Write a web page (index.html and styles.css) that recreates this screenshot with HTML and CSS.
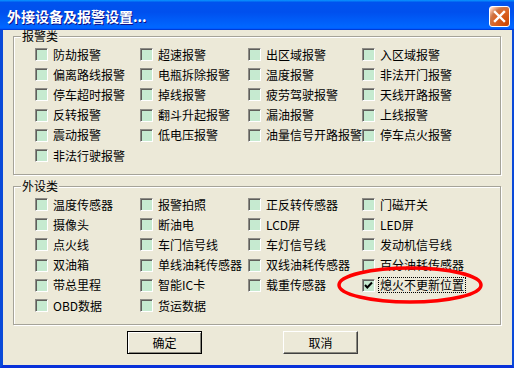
FILE: index.html
```html
<!DOCTYPE html>
<html lang="zh-CN">
<head>
    <meta charset="UTF-8">
    <title>外接设备及报警设置</title>
    <link rel="stylesheet" href="styles.css">
</head>
<body>
    <div class="window">
        <div class="titlebar">
            <span class="title">外接设备及报警设置...</span>
            <button class="close-btn">
                <svg width="13" height="13" viewBox="0 0 13 13"><path d="M2 2 L11 11 M11 2 L2 11" stroke="#fff" stroke-width="2.4" stroke-linecap="square"/></svg>
            </button>
        </div>
        <div class="content">
            <fieldset class="group">
                <legend>报警类</legend>
                <div class="grid">
                    <label class="item"><span class="box"></span>防劫报警</label>
                    <label class="item"><span class="box"></span>超速报警</label>
                    <label class="item"><span class="box"></span>出区域报警</label>
                    <label class="item"><span class="box"></span>入区域报警</label>
                    <label class="item"><span class="box"></span>偏离路线报警</label>
                    <label class="item"><span class="box"></span>电瓶拆除报警</label>
                    <label class="item"><span class="box"></span>温度报警</label>
                    <label class="item"><span class="box"></span>非法开门报警</label>
                    <label class="item"><span class="box"></span>停车超时报警</label>
                    <label class="item"><span class="box"></span>掉线报警</label>
                    <label class="item"><span class="box"></span>疲劳驾驶报警</label>
                    <label class="item"><span class="box"></span>天线开路报警</label>
                    <label class="item"><span class="box"></span>反转报警</label>
                    <label class="item"><span class="box"></span>翻斗升起报警</label>
                    <label class="item"><span class="box"></span>漏油报警</label>
                    <label class="item"><span class="box"></span>上线报警</label>
                    <label class="item"><span class="box"></span>震动报警</label>
                    <label class="item"><span class="box"></span>低电压报警</label>
                    <label class="item"><span class="box"></span>油量信号开路报警</label>
                    <label class="item"><span class="box"></span>停车点火报警</label>
                    <label class="item"><span class="box"></span>非法行驶报警</label>
                </div>
            </fieldset>

            <fieldset class="group group-second">
                <legend>外设类</legend>
                <div class="grid">
                    <label class="item"><span class="box"></span>温度传感器</label>
                    <label class="item"><span class="box"></span>报警拍照</label>
                    <label class="item"><span class="box"></span>正反转传感器</label>
                    <label class="item"><span class="box"></span>门磁开关</label>
                    <label class="item"><span class="box"></span>摄像头</label>
                    <label class="item"><span class="box"></span>断油电</label>
                    <label class="item"><span class="box"></span>LCD屏</label>
                    <label class="item"><span class="box"></span>LED屏</label>
                    <label class="item"><span class="box"></span>点火线</label>
                    <label class="item"><span class="box"></span>车门信号线</label>
                    <label class="item"><span class="box"></span>车灯信号线</label>
                    <label class="item"><span class="box"></span>发动机信号线</label>
                    <label class="item"><span class="box"></span>双油箱</label>
                    <label class="item"><span class="box"></span>单线油耗传感器</label>
                    <label class="item"><span class="box"></span>双线油耗传感器</label>
                    <label class="item"><span class="box"></span>百分油耗传感器</label>
                    <label class="item"><span class="box"></span>带总里程</label>
                    <label class="item"><span class="box"></span>智能IC卡</label>
                    <label class="item"><span class="box"></span>载重传感器</label>
                    <label class="item checked">
                        <span class="box">
                            <svg width="11" height="11" viewBox="0 0 11 11"><path d="M2 5 L4.3 7.5 L9 2.5" fill="none" stroke="#000" stroke-width="2"/></svg>
                        </span>
                        <span class="focus">熄火不更新位置</span>
                    </label>
                    <label class="item"><span class="box"></span>OBD数据</label>
                    <label class="item"><span class="box"></span>货运数据</label>
                </div>
            </fieldset>

            <div class="buttons">
                <button class="btn btn-default">确定</button>
                <button class="btn">取消</button>
            </div>
        </div>

        <!-- red annotation ring -->
        <svg class="ring" width="152" height="40" viewBox="0 0 152 40">
            <ellipse cx="74" cy="19" rx="71" ry="17" fill="none" stroke="#f00" stroke-width="3.5"/>
        </svg>
    </div>
</body>
</html>
```

FILE: styles.css
```css
body {
    margin: 0;
    overflow: hidden;
    font-family: "Noto Sans CJK SC", "Liberation Sans", sans-serif;
    font-size: 12px;
    color: #000;
}
.window {
    position: relative;
    width: 514px;
    height: 368px;
    box-sizing: border-box;
    background-color: #ece9d8;
    border-left: 3px solid #0a4ad9;
    border-right: 2px solid #0a4ad9;
    border-bottom: 3px solid #0831d9;
}
.titlebar {
    height: 30px;
    margin-left: -3px;
    margin-right: -2px;
    display: flex;
    align-items: center;
    justify-content: space-between;
    padding: 0 4px 0 7px;
    background: linear-gradient(180deg, #0997ff, #0053ee 8%, #0050ee 40%, #06f 88%, #06f 93%, #005bff 95%, #003dd7 96%, #003dd7);
}
.title {
    color: #fff;
    font-size: 14px;
    font-weight: bold;
    line-height: 14px;
    text-shadow: 1px 1px #0f1089;
    margin-top: 1px;
}
.close-btn {
    width: 21px;
    height: 21px;
    padding: 0;
    margin-top: 2px;
    border: 1px solid #fff;
    border-radius: 3px;
    display: flex;
    align-items: center;
    justify-content: center;
    background: radial-gradient(circle at 90% 90%, #cc4600 0, #dc6527 55%, #cd7546 70%, #ffccb2 90%, #fff 100%);
}
.content {
    padding: 0 11px 0 10px;
}
.group {
    margin: 0;
    padding: 0;
    min-width: 0;
    border: 1px solid #a5a399;
    box-shadow: inset 1px 1px 0 #fff, 1px 1px 0 #fff;
}
.group-second {
    margin-top: 5px;
}
.group legend {
    margin-left: 7px;
    padding: 0 1px;
    line-height: 12px;
    background-color: #ece9d8;
}
.grid {
    display: grid;
    grid-template-columns: 105px 108px 114px 1fr;
    grid-template-rows: repeat(6, 20.2px);
    height: 132px;
    box-sizing: border-box;
    padding: 2.5px 0 0 21px;
}
.item {
    display: flex;
    align-items: center;
    gap: 5px;
    white-space: nowrap;
    line-height: 14px;
}
.box {
    flex: none;
    width: 13px;
    height: 13px;
    box-sizing: border-box;
    background-color: #c6ead0;
    border: 1px solid;
    border-color: #8d8c86 #fff #fff #8d8c86;
    box-shadow: inset 1px 1px 0 #5f5f5b;
    display: flex;
    align-items: center;
    justify-content: center;
}
.focus {
    margin-left: -2px;
    padding: 0 1px;
    border: 1px dotted #000;
}
.buttons {
    display: flex;
    gap: 81px;
    padding-left: 114px;
    margin-top: 6px;
}
.btn {
    width: 75px;
    height: 23px;
    padding: 0;
    font-family: inherit;
    font-size: 12px;
    color: #000;
    background-color: #ece9d8;
    border: 1px solid;
    border-color: #fff #404040 #404040 #fff;
    box-shadow: inset -1px -1px 0 #8a897f;
}
.btn-default {
    border-color: #000;
    box-shadow: inset 1px 1px 0 #fff, inset -1px -1px 0 #8a897f;
}
.ring {
    position: absolute;
    left: 333px;
    top: 266px;
}
```
